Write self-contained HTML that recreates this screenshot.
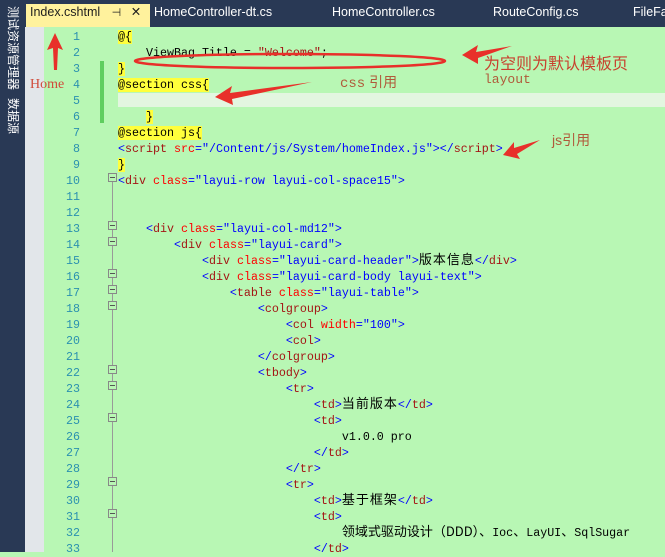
<!DOCTYPE html>
<html><head><meta charset="utf-8"><style>
body{margin:0;width:665px;height:552px;overflow:hidden;background:#b8f7b4;position:relative;font-family:"Liberation Mono","Noto Sans CJK SC",monospace}
.side{position:absolute;left:0;top:0;width:25px;height:552px;background:#293955}
.vt{position:absolute;left:5px;writing-mode:vertical-rl;text-orientation:sideways;color:#fff;font:12px "Liberation Sans","Noto Sans CJK SC",sans-serif;letter-spacing:0}
.tabs{position:absolute;left:25px;top:0;width:640px;height:27px;background:#293955}
.tab{position:absolute;top:5px;height:22px;line-height:22px;font:12.5px "Liberation Sans",sans-serif;color:#fff}
.act{left:1px;width:124px;background:#fff29d;color:#1e1e1e;top:4px;height:23px;padding-left:4px;box-sizing:border-box}
.gut{position:absolute;left:25px;top:27px;width:19px;height:525px;background:#e2e6ea}
.ln{position:absolute;left:44px;width:36px;text-align:right;color:#2b91af;font-size:11.67px;line-height:16px}
.code{position:absolute;left:118px;font-size:11.67px;line-height:16px;white-space:pre;color:#000}
.y{background:#ffff3c}
.t{color:#a31515}.b{color:#0000ff}.a{color:#ff0000}.v{color:#0000ff}
.c{font-size:13px;line-height:8px;letter-spacing:1px;font-family:"Noto Sans CJK SC",sans-serif}
.c2{letter-spacing:0}
.fold{position:absolute;left:108px;width:7px;height:7px;border:1px solid #888;background:#b8f7b4}
.fold:after{content:"";position:absolute;left:1px;top:3px;width:5px;height:1px;background:#555}
.ann{position:absolute;color:#c8402e;font-family:"Liberation Sans","Noto Sans CJK SC",sans-serif}
</style></head><body>
<div class="side"><div class="vt" style="top:6px">测试资源管理器</div><div class="vt" style="top:98px">数据源</div></div>
<div class="tabs">
<div class="tab act">Index.cshtml <span style="margin-left:8px;font-size:11px">⊣</span> <span style="margin-left:6px">✕</span></div>
<div class="tab" style="left:129px">HomeController-dt.cs</div>
<div class="tab" style="left:307px">HomeController.cs</div>
<div class="tab" style="left:468px">RouteConfig.cs</div>
<div class="tab" style="left:608px">FileFa</div>
</div>
<div class="gut"></div>
<div style="position:absolute;left:118px;top:93px;width:547px;height:14px;background:#e3f6e0"></div>
<div style="position:absolute;left:100px;top:61px;width:4px;height:62px;background:#5fce5f"></div>
<div style="position:absolute;left:112px;top:181px;width:1px;height:371px;background:#999"></div>
<div class="ln" style="top:29px">1<br>2<br>3<br>4<br>5<br>6<br>7<br>8<br>9<br>10<br>11<br>12<br>13<br>14<br>15<br>16<br>17<br>18<br>19<br>20<br>21<br>22<br>23<br>24<br>25<br>26<br>27<br>28<br>29<br>30<br>31<br>32<br>33</div>
<div class="fold" style="top:173px"></div><div class="fold" style="top:221px"></div><div class="fold" style="top:237px"></div><div class="fold" style="top:269px"></div><div class="fold" style="top:285px"></div><div class="fold" style="top:301px"></div><div class="fold" style="top:365px"></div><div class="fold" style="top:381px"></div><div class="fold" style="top:413px"></div><div class="fold" style="top:477px"></div><div class="fold" style="top:509px"></div>
<div class="code" style="top:29px"><span class="y">@{</span>
    ViewBag.Title = <span class="t">"Welcome"</span>;
<span class="y">}</span>
<span class="y">@section css{</span>

    <span class="y">}</span>
<span class="y">@section js{</span>
<span class="b">&lt;</span><span class="t">script</span> <span class="a">src</span><span class="b">="/Content/js/System/homeIndex.js"&gt;&lt;/</span><span class="t">script</span><span class="b">&gt;</span>
<span class="y">}</span>
<span class="b">&lt;</span><span class="t">div</span> <span class="a">class</span><span class="b">="layui-row layui-col-space15"&gt;</span>


    <span class="b">&lt;</span><span class="t">div</span> <span class="a">class</span><span class="b">="layui-col-md12"&gt;</span>
        <span class="b">&lt;</span><span class="t">div</span> <span class="a">class</span><span class="b">="layui-card"&gt;</span>
            <span class="b">&lt;</span><span class="t">div</span> <span class="a">class</span><span class="b">="layui-card-header"&gt;</span><span class="c">版本信息</span><span class="b">&lt;/</span><span class="t">div</span><span class="b">&gt;</span>
            <span class="b">&lt;</span><span class="t">div</span> <span class="a">class</span><span class="b">="layui-card-body layui-text"&gt;</span>
                <span class="b">&lt;</span><span class="t">table</span> <span class="a">class</span><span class="b">="layui-table"&gt;</span>
                    <span class="b">&lt;</span><span class="t">colgroup</span><span class="b">&gt;</span>
                        <span class="b">&lt;</span><span class="t">col</span> <span class="a">width</span><span class="b">="100"&gt;</span>
                        <span class="b">&lt;</span><span class="t">col</span><span class="b">&gt;</span>
                    <span class="b">&lt;/</span><span class="t">colgroup</span><span class="b">&gt;</span>
                    <span class="b">&lt;</span><span class="t">tbody</span><span class="b">&gt;</span>
                        <span class="b">&lt;</span><span class="t">tr</span><span class="b">&gt;</span>
                            <span class="b">&lt;</span><span class="t">td</span><span class="b">&gt;</span><span class="c">当前版本</span><span class="b">&lt;/</span><span class="t">td</span><span class="b">&gt;</span>
                            <span class="b">&lt;</span><span class="t">td</span><span class="b">&gt;</span>
                                v1.0.0 pro
                            <span class="b">&lt;/</span><span class="t">td</span><span class="b">&gt;</span>
                        <span class="b">&lt;/</span><span class="t">tr</span><span class="b">&gt;</span>
                        <span class="b">&lt;</span><span class="t">tr</span><span class="b">&gt;</span>
                            <span class="b">&lt;</span><span class="t">td</span><span class="b">&gt;</span><span class="c">基于框架</span><span class="b">&lt;/</span><span class="t">td</span><span class="b">&gt;</span>
                            <span class="b">&lt;</span><span class="t">td</span><span class="b">&gt;</span>
                                <span class="c c2">领域式驱动设计（DDD）、</span>Ioc<span class="c c2">、</span>LayUI<span class="c c2">、</span>SqlSugar
                            <span class="b">&lt;/</span><span class="t">td</span><span class="b">&gt;</span></div>
<svg style="position:absolute;left:0;top:0" width="665" height="552">
<ellipse cx="290" cy="61" rx="155" ry="7" fill="none" stroke="#e8302a" stroke-width="2.5"/>
<polygon points="462,55 478,45 476,52 512,46 478,58 478,64" fill="#e8302a"/>
<polygon points="215,97 232,86 230,93 312,82 232,99 233,105" fill="#e8302a"/>
<polygon points="503,155 514,142 514,148 540,140 517,154 520,159" fill="#e8302a"/>
<polygon points="55,33 47,50 53,48 54,70 57,70 58,48 63,50" fill="#e8302a"/>
</svg>
<div class="ann" style="left:484px;top:50px;font-size:16px">为空则为默认模板页</div>
<div class="ann" style="left:484px;top:72px;font:13px 'Liberation Mono',monospace;color:#b05a3a">layout</div>
<div class="ann" style="left:340px;top:72px;font-size:14px;color:#b05a3a"><span style="font-family:'Liberation Mono'">css</span> 引用</div>
<div class="ann" style="left:552px;top:130px;font-size:14px;color:#b05a3a">js引用</div>
<div class="ann" style="left:30px;top:77px;font:14px 'Liberation Serif',serif;color:#d04a3a">Home</div>
</body></html>
